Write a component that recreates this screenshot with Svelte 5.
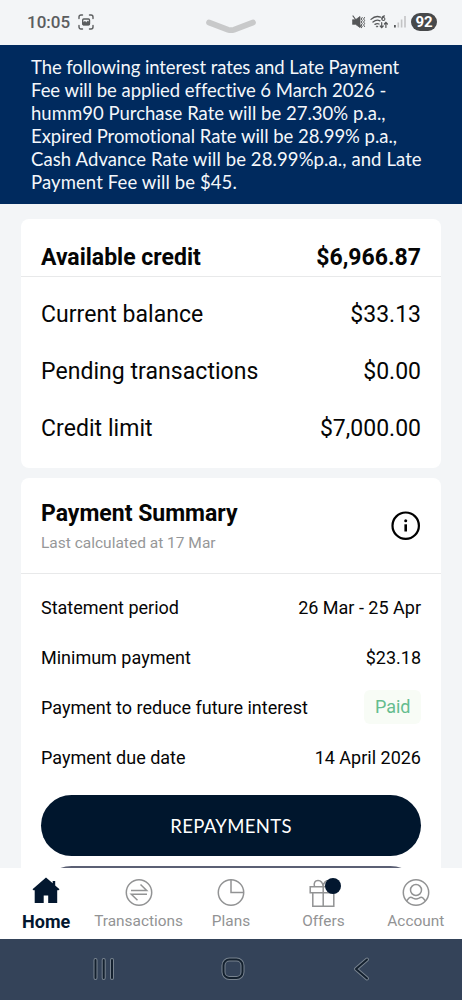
<script lang="ts">
  type Row = { label: string; value: string; paid?: boolean };

  const notice = [
    { text: 'The following interest rates and Late Payment', tracking: -0.08 },
    { text: 'Fee will be applied effective 6 March 2026 -', tracking: -0.03 },
    { text: 'humm90 Purchase Rate will be 27.30% p.a.,', tracking: 0.02 },
    { text: 'Expired Promotional Rate will be 28.99% p.a.,', tracking: -0.03 },
    { text: 'Cash Advance Rate will be 28.99%p.a., and Late', tracking: 0.1 },
    { text: 'Payment Fee will be $45.', tracking: 0.11 }
  ];

  const credit: Row[] = [
    { label: 'Current balance', value: '$33.13' },
    { label: 'Pending transactions', value: '$0.00' },
    { label: 'Credit limit', value: '$7,000.00' }
  ];

  const summary: Row[] = [
    { label: 'Statement period', value: '26 Mar - 25 Apr' },
    { label: 'Minimum payment', value: '$23.18' },
    { label: 'Payment to reduce future interest', value: 'Paid', paid: true },
    { label: 'Payment due date', value: '14 April 2026' }
  ];

  const tabs = ['Home', 'Transactions', 'Plans', 'Offers', 'Account'];
  let active = $state('Home');
</script>

<div class="screen">
  <header class="status">
    <div class="clock">
      <span>10:05</span>
      <svg width="16" height="16" viewBox="0 0 16 16" fill="none" stroke="#5b5d5f" stroke-width="1.4" stroke-linecap="round">
        <path d="M1 4.5V3a2 2 0 0 1 2-2h1.5M11.5 1H13a2 2 0 0 1 2 2v1.5M15 11.5V13a2 2 0 0 1-2 2h-1.5M4.5 15H3a2 2 0 0 1-2-2v-1.5" />
        <rect x="4.7" y="5" width="6.8" height="5.8" rx="1" stroke-width="1.4" />
        <path d="M5 10.5V8.500l2-1 1.300 1 1.500-1.500 1.600 1.500v2z" fill="#5b5d5f" stroke-width=".8" />
      </svg>
    </div>
    <svg class="handle" width="50" height="16" viewBox="0 0 50 16" fill="none">
      <path d="M3 3.5L22 10.700Q25 11.700 28 10.700L47 3.5" stroke="#c8c9ca" stroke-width="5.7" stroke-linecap="round" />
    </svg>
    <div class="indicators">
      <svg width="14" height="14" viewBox="0 0 14 14" fill="none" stroke="#555759" stroke-width="1.2" stroke-linecap="round">
        <path d="M.8 4.8h2.7L8 1.5v11L3.5 9.3H.8z" fill="#555759" stroke-width=".8" />
        <path d="M1 1l8.5 11.5" />
        <path d="M10.2 2.5l-.9 1.5 1 1.5-1 1.500 1 1.500-1 1.500.9 1.500M12.500 2.500l-.9 1.500 1 1.500-1 1.500 1 1.500-1 1.500.9 1.500" stroke-width="1" />
      </svg>
      <svg width="19" height="14" viewBox="0 0 19 14" fill="none" stroke="#555759" stroke-width="1.3" stroke-linecap="round">
        <path d="M1 4.4Q5.5.1 10.5 2.2M3 7Q6.5 4 10 5.8M5 9.4Q7 8 9 9" />
        <circle cx="7" cy="11.5" r=".7" fill="#555759" stroke-width=".5" />
        <path d="M14.5.9Q11.700 1.500 11.900 4" stroke-width="1.1" />
        <circle cx="13.4" cy="4" r="1.500" stroke-width="1.1" />
        <path d="M11.700 7.500v5M10.200 11l1.500 1.700 1.500-1.700M15.900 12.500v-5M14.400 9l1.500-1.700 1.500 1.700" stroke-width="1.200" />
      </svg>
      <svg width="13" height="13" viewBox="0 0 13 13">
        <rect x="0" y="10" width="1.800" height="2.500" fill="#555759" />
        <path d="M3.500 7.500h1.600v5H3.500zM6.800 4.500h1.600v8H6.800zM10.200 1h1.600v11.500h-1.600z" fill="#c3c4c5" />
      </svg>
      <span class="battery">92</span>
    </div>
  </header>

  <section class="notice">
    {#each notice as line}
      <div style:letter-spacing="{line.tracking}px">{line.text}</div>
    {/each}
  </section>

  <main class="content">
    <section class="card credit">
      <div class="row available">
        <span>Available credit</span>
        <span>$6,966.87</span>
      </div>
      <div class="credit-rows">
        {#each credit as item}
          <div class="row">
            <span>{item.label}</span>
            <span>{item.value}</span>
          </div>
        {/each}
      </div>
    </section>

    <section class="card">
      <div class="summary-head">
        <div class="summary-title">
          <h2>Payment Summary</h2>
          <p>Last calculated at 17 Mar</p>
        </div>
        <button class="info" aria-label="About payment summary">
          <svg width="30" height="30" viewBox="0 0 30 30" fill="none" stroke="#000">
            <circle cx="14.700" cy="14.700" r="13.200" stroke-width="2.200" />
            <path d="M14.700 13.300v7.200" stroke-width="2.600" />
            <circle cx="14.700" cy="9.800" r="1.500" fill="#000" stroke="none" />
          </svg>
        </button>
      </div>
      <div class="summary-rows">
        {#each summary as item}
          <div class="row">
            <span>{item.label}</span>
            <span class:paid={item.paid}>{item.value}</span>
          </div>
        {/each}
      </div>
      <div class="actions">
        <button class="primary">REPAYMENTS</button>
        <button class="secondary" aria-label="More"></button>
      </div>
    </section>
  </main>

  <nav class="tabs">
    {#each tabs as tab}
      <button class="tab" class:active={active === tab} onclick={() => (active = tab)}>
        <svg width="30" height="31" viewBox="0 0 30 31" fill="none" stroke="#929394" stroke-width="1.5">
          {#if tab === 'Home'}
            <path d="M15 1.5L1.500 13.200l1 1.100H3.700V27H12.700v-7.500h4.500V27h9V14.300h1.300l1-1.100-4.300-3.700V5h-2.500v2.300z" fill="#03172f" stroke="none" />
          {:else if tab === 'Transactions'}
            <circle cx="15" cy="16.500" r="12.700" />
            <path d="M7 14.500h15.700L16.500 8.500M23 18.200H7.300l6.200 6" />
          {:else if tab === 'Plans'}
            <circle cx="15" cy="16.500" r="12.700" />
            <path d="M15 3.800v12.700h12.700" />
          {:else if tab === 'Offers'}
            <path d="M2.200 10.700h23.800v6H2.200zM4.800 16.700h21v13.500h-21zM15.200 10.700v19.500" />
            <path d="M6.500 10.700c-1-3.800.5-6.200 3.500-6.200s4.800 2.500 5.200 6.200c.4-3.700 2.500-6.200 5.300-6.200" />
          {:else}
            <circle cx="15" cy="16.500" r="12.700" />
            <circle cx="15" cy="14" r="5.500" />
            <path d="M5.500 25l2.500-3c2-1.500 3-.4 4 .2 2 1 4 1 6 0 1-.6 2-1.700 4-.2l2.500 3" />
          {/if}
        </svg>
        {#if tab === 'Offers'}
          <i class="dot"></i>
        {/if}
        <span>{tab}</span>
      </button>
    {/each}
  </nav>

  <footer class="system">
    <svg width="24" height="26" viewBox="0 0 24 26" fill="none" stroke-linecap="round">
      <path d="M3.500 4v18M11.700 4v18M20 4v18" stroke="#78838f" stroke-width="4" />
      <path d="M3.500 4v18M11.700 4v18M20 4v18" stroke="#13202e" stroke-width="2" />
    </svg>
    <svg width="24" height="26" viewBox="0 0 24 26" fill="none">
      <rect x="2.500" y="3.500" width="19" height="18.500" rx="6" stroke="#78838f" stroke-width="4" />
      <rect x="2.500" y="3.500" width="19" height="18.500" rx="6" stroke="#13202e" stroke-width="2" />
    </svg>
    <svg width="24" height="26" viewBox="0 0 24 26" fill="none" stroke-linecap="round" stroke-linejoin="round">
      <path d="M18 3.500L7 13l11 9.500" stroke="#78838f" stroke-width="4" />
      <path d="M18 3.500L7 13l11 9.500" stroke="#13202e" stroke-width="2" />
    </svg>
  </footer>
</div>

<style>
  :global(body) {
    background: #f3f5f7;
  }

  .screen {
    display: flex;
    flex-direction: column;
    width: 462px;
    height: 1000px;
    overflow: hidden;
    background: #f3f5f7;
    color: #050505;
    font-family: Roboto, 'Liberation Sans', sans-serif;
  }

  button {
    padding: 0;
    border: 0;
    background: none;
    color: inherit;
    font: inherit;
    cursor: pointer;
  }

  svg {
    display: block;
    flex-shrink: 0;
  }

  .status {
    display: grid;
    grid-template-columns: 1fr 50px 1fr;
    align-items: center;
    flex: 0 0 45px;
    box-sizing: border-box;
    padding: 0 25px 2px 27px;
  }

  .clock {
    display: flex;
    align-items: center;
    gap: 8px;
    color: #5b5d5f;
    font-size: 17px;
    font-weight: 500;
  }

  .handle {
    margin-top: 11px;
    margin-left: -1px;
  }

  .indicators {
    display: flex;
    align-items: center;
    justify-content: flex-end;
    gap: 4.5px;
  }

  .battery {
    width: 26px;
    height: 18px;
    border-radius: 9px;
    background: #47494b;
    color: #fff;
    font-size: 15px;
    font-weight: 700;
    line-height: 18px;
    text-align: center;
  }

  .notice {
    flex: 0 0 159px;
    box-sizing: border-box;
    padding: 11px 30px 10px 31px;
    background: #002a5e;
    color: #f4f7fb;
    font-family: Lato, sans-serif;
    font-size: 18.5px;
    line-height: 23px;
    white-space: nowrap;
  }

  .content {
    display: flex;
    flex: 1;
    flex-direction: column;
    gap: 10px;
    min-height: 0;
    padding: 15px 21px 0;
    overflow: hidden;
  }

  .card {
    flex-shrink: 0;
    border-radius: 8px;
    background: #fff;
  }

  .row {
    display: flex;
    align-items: center;
    justify-content: space-between;
    padding: 0 20px;
  }

  .credit {
    height: 249px;
    font-size: 23px;
  }

  .available {
    box-sizing: border-box;
    height: 58px;
    padding-top: 19px;
    border-bottom: 1px solid #e8e9ea;
    font-weight: 700;
  }

  .credit-rows {
    padding-top: 9px;
  }

  .credit-rows .row {
    height: 57px;
  }

  .credit-rows span:first-child {
    letter-spacing: 0.05px;
  }

  .summary-head {
    display: flex;
    align-items: center;
    justify-content: space-between;
    box-sizing: border-box;
    height: 96px;
    padding: 0 20px;
    border-bottom: 1px solid #e8e9ea;
  }

  .summary-title {
    padding-top: 5px;
  }

  h2 {
    margin: 0;
    font-size: 23px;
    font-weight: 700;
    line-height: 30px;
  }

  .summary-head p {
    margin: 0;
    color: #969798;
    font-size: 15.5px;
    line-height: 29px;
  }

  .summary-rows {
    padding-top: 8px;
    font-size: 18px;
  }

  .summary-rows .row {
    height: 50px;
  }

  .paid {
    padding: 0 10.5px;
    border-radius: 6px;
    background: #f8fcf6;
    color: #65bd8e;
    line-height: 34px;
  }

  .actions {
    display: flex;
    flex-direction: column;
    gap: 10px;
    padding: 13px 20px;
  }

  .primary,
  .secondary {
    box-sizing: border-box;
    height: 61px;
    border-radius: 31px;
  }

  .primary {
    background: #00162d;
    color: #fff;
    font-family: Lato, sans-serif;
    font-size: 18.5px;
    letter-spacing: 0.35px;
  }

  .secondary {
    border: 2px solid #5b6074;
  }

  .tabs {
    display: grid;
    grid-template-columns: repeat(5, 1fr);
    flex: 0 0 71px;
    background: #fff;
  }

  .tab {
    position: relative;
    display: flex;
    flex-direction: column;
    align-items: center;
    justify-content: flex-start;
    padding-top: 8px;
    color: #929394;
    font-size: 15.4px;
    line-height: 29px;
  }

  .tab span {
    white-space: nowrap;
  }

  .active {
    color: #03172f;
    font-size: 18px;
    font-weight: 700;
  }

  .dot {
    position: absolute;
    top: 10px;
    left: 48px;
    width: 16px;
    height: 16px;
    border-radius: 50%;
    background: #03172f;
  }

  .system {
    display: flex;
    align-items: center;
    justify-content: space-between;
    flex: 0 0 61px;
    box-sizing: border-box;
    padding: 0 89px 2px 92px;
    background: #344359;
  }
</style>
